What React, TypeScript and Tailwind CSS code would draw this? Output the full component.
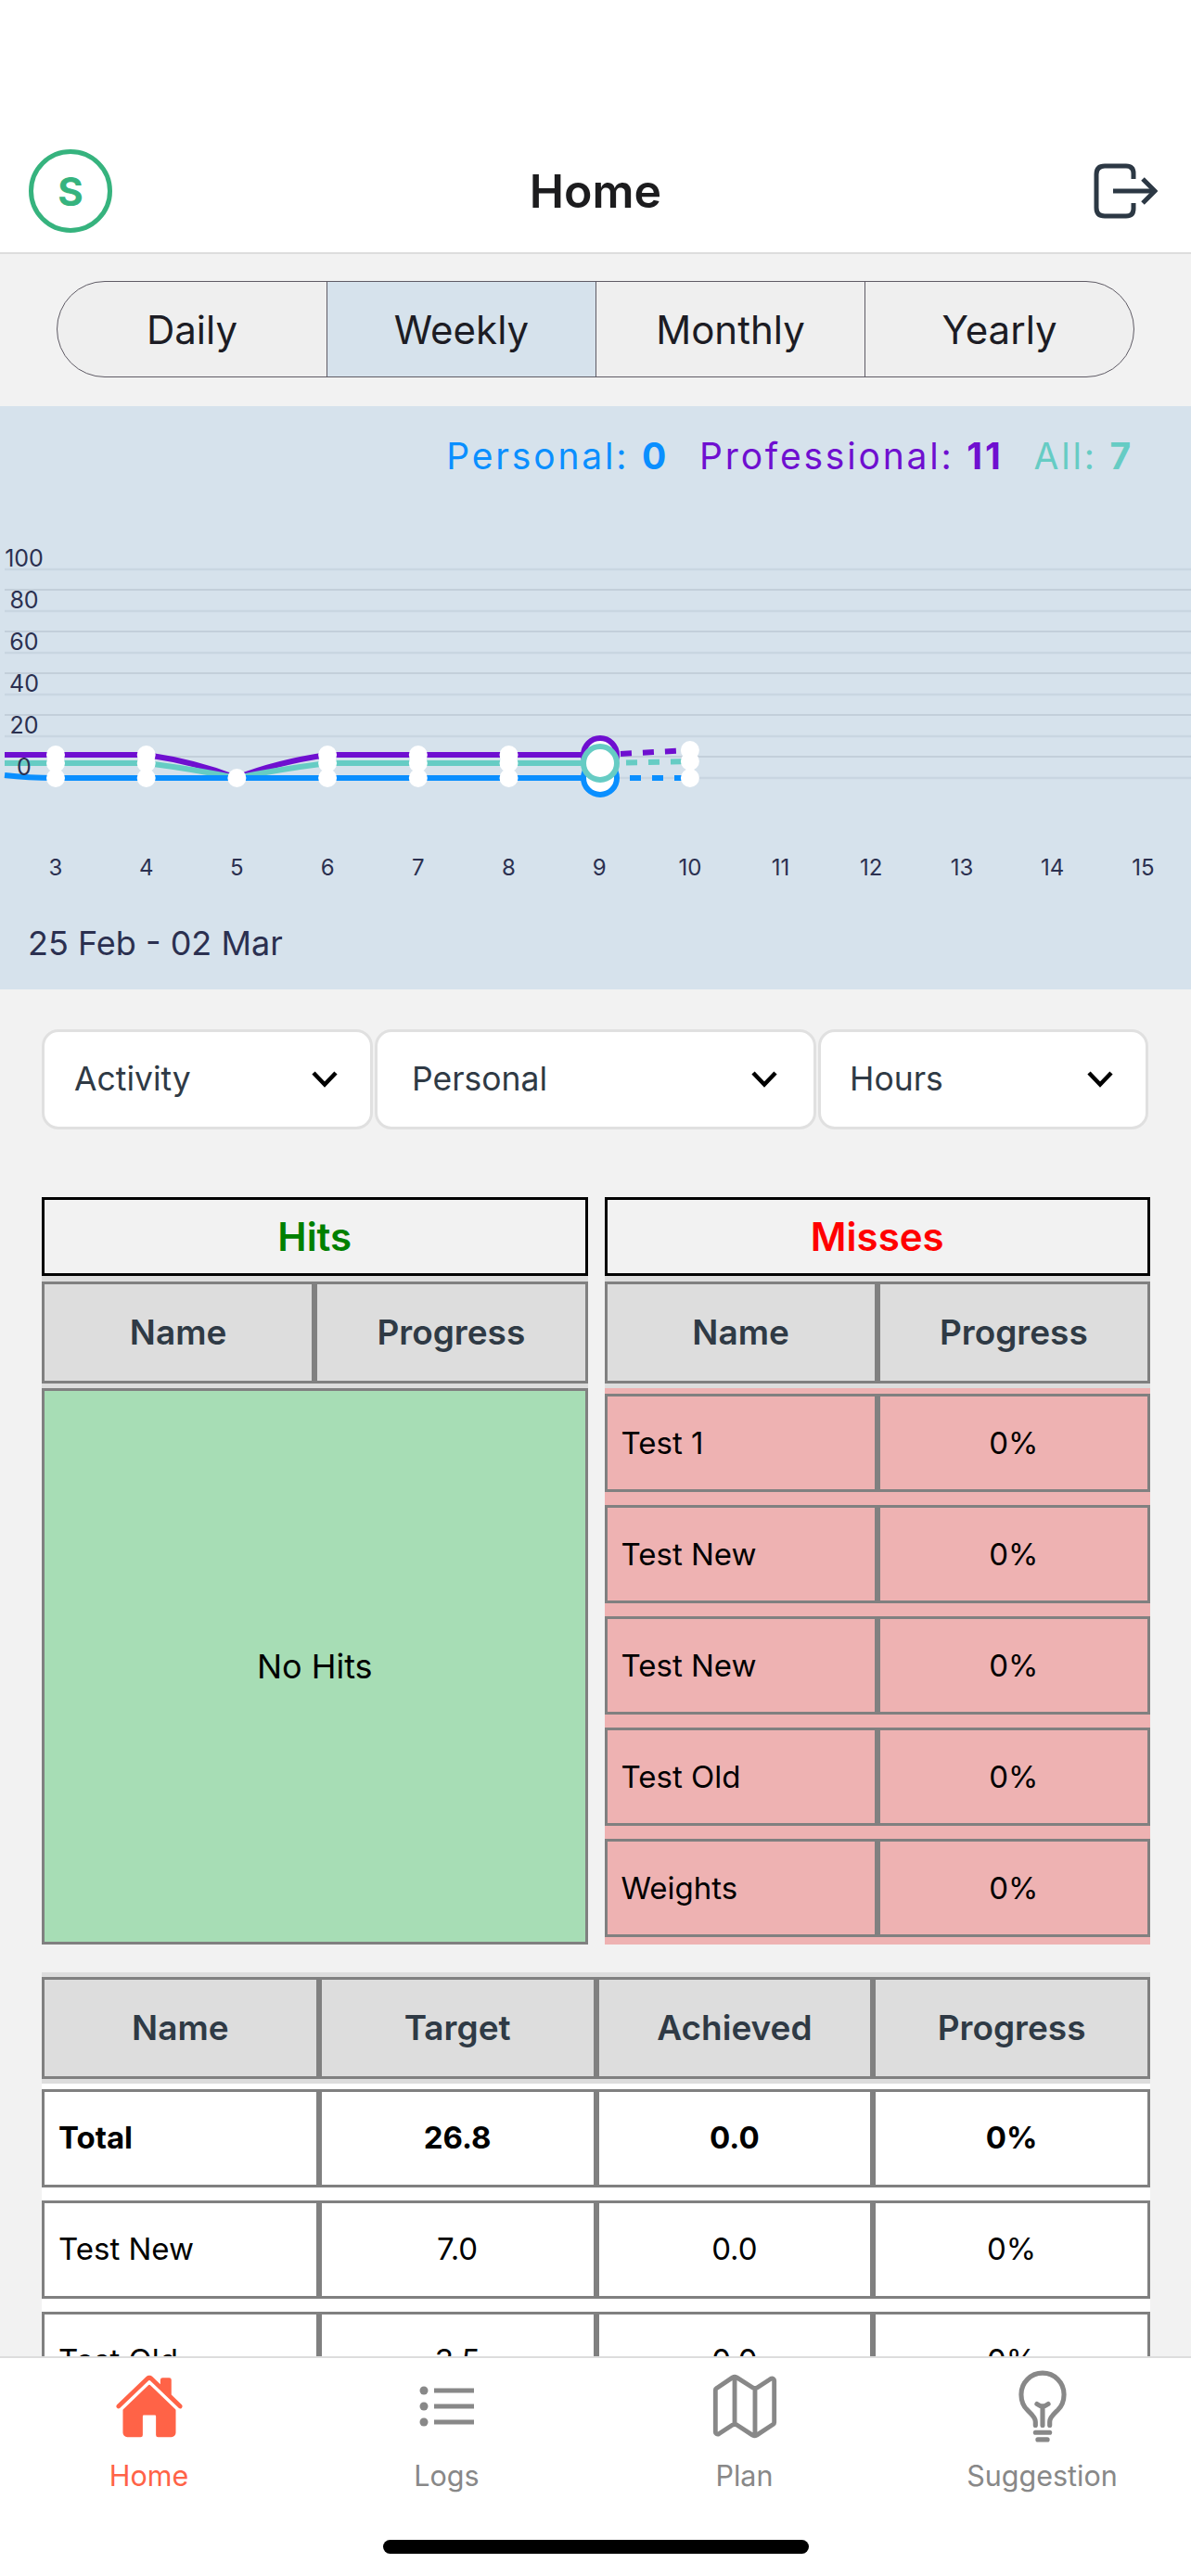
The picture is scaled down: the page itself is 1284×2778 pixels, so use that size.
import { IoHome, IoMapOutline, IoBulbOutline } from 'react-icons/io5'

const gridLines = [614, 636, 659, 681, 704, 726, 749, 771, 794, 816, 839]
const yLabels = [
    { label: '100', y: 611 },
    { label: '80', y: 656 },
    { label: '60', y: 701 },
    { label: '40', y: 746 },
    { label: '20', y: 791 },
    { label: '0', y: 836 },
]
const days = [3, 4, 5, 6, 7, 8, 9, 10, 11, 12, 13, 14, 15]
const dayX = (i: number) => 60 + i * 97.7

const misses = ['Test 1', 'Test New', 'Test New', 'Test Old', 'Weights']
const totals = [
    { name: 'Total', target: '26.8', achieved: '0.0', progress: '0%', bold: true },
    { name: 'Test New', target: '7.0', achieved: '0.0', progress: '0%', bold: false },
    { name: 'Test Old', target: '3.5', achieved: '0.0', progress: '0%', bold: false },
]

function Chevron() {
    return (
        <svg width="28" height="18" viewBox="0 0 28 18" fill="none" stroke="#000" strokeWidth="4.5">
            <path d="M2 2 L14 14.5 L26 2" />
        </svg>
    )
}

function Dropdown({ label, box }: { label: string; box: string }) {
    return (
        <div className={`${box} h-[108px] bg-white border-[3px] border-[#e0e0e0] rounded-[18px] flex items-center justify-between`}>
            <span className="text-[35.5px] text-[#2f3a45]">{label}</span>
            <Chevron />
        </div>
    )
}

function LogsIcon() {
    return (
        <svg width="59" height="48" viewBox="5 0 59 48" fill="#888888">
            <circle cx="10" cy="7" r="4.5" />
            <circle cx="10" cy="24" r="4.5" />
            <circle cx="10" cy="41" r="4.5" />
            <rect x="21" y="4.5" width="43" height="5" />
            <rect x="21" y="21.5" width="43" height="5" />
            <rect x="21" y="38.5" width="43" height="5" />
        </svg>
    )
}

function Chart() {
    const stops = [0, 1, 3, 4, 5, 6, 7]
    return (
        <svg width="1284" height="420" viewBox="0 546 1284 420" className="block" fill="none">
            {gridLines.map((y, i) => (
                <line
                    key={y}
                    x1="5"
                    x2="1284"
                    y1={y}
                    y2={y}
                    stroke={i % 2 === 0 ? '#c9d6e1' : '#bcc9d5'}
                    strokeWidth={i % 2 === 0 ? 2.5 : 1.5}
                />
            ))}

            <path d="M5 814 H158 Q212 822 255 839 Q298 822 353 814 H647" stroke="#6f0fd0" strokeWidth="6" />
            <path d="M647 814 L745 809" stroke="#6f0fd0" strokeWidth="6" strokeDasharray="12 12" strokeDashoffset="-22" />
            <path d="M5 823 H158 Q212 830 255 839 Q298 830 353 823 H647" stroke="#66ccc4" strokeWidth="6" />
            <path d="M647 823 L745 821" stroke="#66ccc4" strokeWidth="6" strokeDasharray="12 12" strokeDashoffset="-28" />
            <path d="M5 836 Q30 839 60 839 H647" stroke="#0a8fff" strokeWidth="6" />
            <path d="M647 839 H745" stroke="#0a8fff" strokeWidth="6" strokeDasharray="12 12" strokeDashoffset="-32" />

            {yLabels.map(l => (
                <text key={l.label} x="26" y={l.y} textAnchor="middle" fontSize="25" fill="#2b3050">{l.label}</text>
            ))}
            {days.map((d, i) => (
                <text key={d} x={dayX(i)} y="944" textAnchor="middle" fontSize="24" fill="#2b3050">{d}</text>
            ))}

            {stops.map(i => (
                <g key={i} fill="#fff">
                    <circle cx={dayX(i)} cy={i === 7 ? 809 : 814} r="10" />
                    <circle cx={dayX(i)} cy={i === 7 ? 821 : 823} r="10" />
                    <circle cx={dayX(i)} cy="839" r="10" />
                </g>
            ))}
            <circle cx={dayX(2)} cy="839" r="10" fill="#fff" />

            <circle cx="647" cy="814" r="18" fill="#fff" stroke="#6f0fd0" strokeWidth="6" />
            <circle cx="647" cy="839" r="18" fill="#fff" stroke="#0a8fff" strokeWidth="6" />
            <circle cx="647" cy="823" r="18" fill="#fff" stroke="#66ccc4" strokeWidth="6" />
        </svg>
    )
}

export default function App() {
    return (
        <div className="w-[1284px] h-[2778px] flex flex-col overflow-hidden bg-[#f2f2f2] font-['Inter','Liberation_Sans',sans-serif]">
            {/* header */}
            <div className="h-[274px] shrink-0 bg-white border-b-2 border-[#dddddd] pt-[140px] pl-[31px] pr-[36px] flex items-center">
                <div className="w-[110px]">
                    <div className="w-[90px] h-[90px] rounded-full border-[5px] border-[#36b37e] flex items-center justify-center text-[42px] font-bold text-[#36b37e]">S</div>
                </div>
                <div className="flex-1 text-center text-[50px] font-semibold text-[#1c1c1e]">Home</div>
                <div className="w-[105px] flex justify-end">
                    <svg width="70" height="62" viewBox="1177 175 70 62" fill="none" stroke="#2c3844" strokeWidth="5">
                        <path d="M1221 193 V187 Q1221 179 1213 179 H1190 Q1181 179 1181 188 V224 Q1181 233 1190 233 H1213 Q1221 233 1221 225 V219" />
                        <path d="M1199 206 H1244" />
                        <path d="M1231 193 L1244 206 L1231 219" />
                    </svg>
                </div>
            </div>

            <div className="flex-1 min-h-0 overflow-hidden">
                {/* period tabs */}
                <div className="h-[164px] pt-[29px] px-[61px]">
                    <div className="h-[104px] grid grid-cols-4 rounded-[52px] border-[1.5px] border-[#5f5b65] overflow-hidden bg-[#efefef] text-[42px] text-[#1c1c24]">
                        <div className="flex items-center justify-center">Daily</div>
                        <div className="flex items-center justify-center bg-[#d6e2ec] border-l-[1.5px] border-[#5f5b65]">Weekly</div>
                        <div className="flex items-center justify-center border-l-[1.5px] border-[#5f5b65]">Monthly</div>
                        <div className="flex items-center justify-center border-l-[1.5px] border-[#5f5b65]">Yearly</div>
                    </div>
                </div>

                {/* chart */}
                <div className="h-[629px] bg-[#d6e2ec]">
                    <div className="h-[108px] pt-[32px] pr-[62px] flex justify-end gap-[33px] text-[39px] leading-[44px] tracking-[2.8px]">
                        <span className="text-[#0a8fff]">Personal: <b className="font-bold">0</b></span>
                        <span className="text-[#6f0fd0]">Professional: <b className="font-bold">11</b></span>
                        <span className="text-[#66ccc4]">All: <b className="font-bold">7</b></span>
                    </div>
                    <Chart />
                    <div className="mt-[29px] pl-[30px] text-[36px] leading-[44px] text-[#2b3050]">25 Feb - 02 Mar</div>
                </div>

                {/* filters */}
                <div className="pt-[43px] px-[45px] flex gap-[2px]">
                    <Dropdown label="Activity" box="w-[357px] pl-[32px] pr-[35px]" />
                    <Dropdown label="Personal" box="w-[476px] pl-[37px] pr-[39px]" />
                    <Dropdown label="Hours" box="w-[356px] pl-[31px] pr-[35px]" />
                </div>

                <div className="pl-[45px] pr-[44px]">
                    {/* hits and misses */}
                    <div className="mt-[73px] grid grid-cols-2 gap-[18px]">
                        <div>
                            <div className="h-[85px] border-[3px] border-black flex items-center justify-center text-[42px] font-semibold text-[#008000]">Hits</div>
                            <div className="h-[121px] bg-[#dddddd] pt-[6px]">
                                <div className="h-[110px] grid grid-cols-2 text-[37px] font-semibold text-[#2f3a45]">
                                    <div className="border-[3px] border-[#808080] flex items-center justify-center">Name</div>
                                    <div className="border-[3px] border-[#808080] flex items-center justify-center">Progress</div>
                                </div>
                            </div>
                            <div className="h-[600px] bg-[#a7ddb5] border-[3px] border-[#808080] flex items-center justify-center text-[36px] text-black">No Hits</div>
                        </div>
                        <div>
                            <div className="h-[85px] border-[3px] border-black flex items-center justify-center text-[42px] font-semibold text-[#ff0000]">Misses</div>
                            <div className="h-[121px] bg-[#dddddd] pt-[6px]">
                                <div className="h-[110px] grid grid-cols-2 text-[37px] font-semibold text-[#2f3a45]">
                                    <div className="border-[3px] border-[#808080] flex items-center justify-center">Name</div>
                                    <div className="border-[3px] border-[#808080] flex items-center justify-center">Progress</div>
                                </div>
                            </div>
                            <div className="h-[600px] bg-[#eeb2b2] pt-[6px] flex flex-col gap-[14px] text-[33px] text-black">
                                {misses.map((name, i) => (
                                    <div key={i} className="h-[106px] shrink-0 grid grid-cols-2">
                                        <div className="border-[3px] border-[#808080] flex items-center pl-[15px] pt-[2px]">{name}</div>
                                        <div className="border-[3px] border-[#808080] flex items-center justify-center pt-[2px]">0%</div>
                                    </div>
                                ))}
                            </div>
                        </div>
                    </div>

                    {/* totals table */}
                    <div className="mt-[30px] h-[120px] bg-[#dddddd] pt-[5px]">
                        <div className="h-[110px] grid grid-cols-4 text-[37px] font-semibold text-[#2f3a45]">
                            <div className="border-[3px] border-[#808080] flex items-center justify-center">Name</div>
                            <div className="border-[3px] border-[#808080] flex items-center justify-center">Target</div>
                            <div className="border-[3px] border-[#808080] flex items-center justify-center">Achieved</div>
                            <div className="border-[3px] border-[#808080] flex items-center justify-center">Progress</div>
                        </div>
                    </div>
                    <div className="bg-white pt-[6px] flex flex-col gap-[14px] text-[33px] text-black">
                        {totals.map(row => (
                            <div key={row.name} className={`h-[106px] shrink-0 grid grid-cols-4 ${row.bold ? 'font-bold' : ''}`}>
                                <div className="border-[3px] border-[#808080] flex items-center pl-[15px]">{row.name}</div>
                                <div className="border-[3px] border-[#808080] flex items-center justify-center">{row.target}</div>
                                <div className="border-[3px] border-[#808080] flex items-center justify-center">{row.achieved}</div>
                                <div className="border-[3px] border-[#808080] flex items-center justify-center">{row.progress}</div>
                            </div>
                        ))}
                    </div>
                </div>
            </div>

            {/* tab bar */}
            <div className="h-[237px] shrink-0 bg-white border-t-2 border-[#dddddd]">
                <div className="grid grid-cols-4 pt-[14px] text-[30.5px] text-[#888888]">
                    <div className="flex flex-col items-center text-[#ff6347]">
                        <div className="h-[76px] flex items-center"><IoHome size={76} /></div>
                        <span className="mt-[19px] leading-[36px]">Home</span>
                    </div>
                    <div className="flex flex-col items-center">
                        <div className="h-[76px] flex items-center"><LogsIcon /></div>
                        <span className="mt-[19px] leading-[36px]">Logs</span>
                    </div>
                    <div className="flex flex-col items-center">
                        <div className="h-[76px] flex items-center"><IoMapOutline size={78} /></div>
                        <span className="mt-[19px] leading-[36px]">Plan</span>
                    </div>
                    <div className="flex flex-col items-center">
                        <div className="h-[76px] flex items-center"><IoBulbOutline size={82} /></div>
                        <span className="mt-[19px] leading-[36px]">Suggestion</span>
                    </div>
                </div>
                <div className="mt-[51px] mx-auto w-[459px] h-[15px] rounded-full bg-black"></div>
            </div>
        </div>
    )
}
